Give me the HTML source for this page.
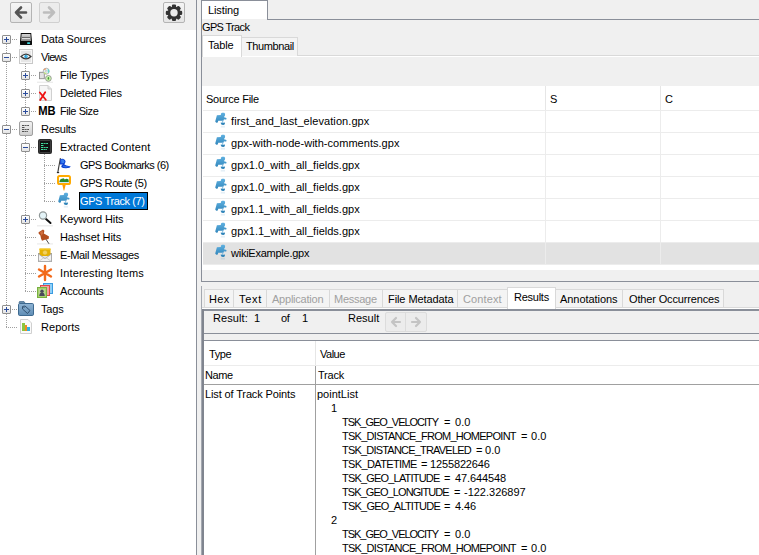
<!DOCTYPE html>
<html><head><meta charset="utf-8">
<style>
*{box-sizing:border-box;margin:0;padding:0}
html,body{width:759px;height:555px;overflow:hidden;background:#f0f0f0}
body{position:relative;font-family:"Liberation Sans",sans-serif;font-size:11px;color:#000}
.a{position:absolute}
.t{position:absolute;white-space:nowrap;line-height:13px;font-size:11px}
.dim{color:#a0a0a0}
.hl{position:absolute;height:1px}
.vl{position:absolute;width:1px}
.dh{position:absolute;height:1px;background-image:linear-gradient(90deg,#a0a0a0 50%,transparent 50%);background-size:2px 1px}
.dv{position:absolute;width:1px;background-image:linear-gradient(180deg,#a0a0a0 50%,transparent 50%);background-size:1px 2px}
.box{position:absolute;width:9px;height:9px;border:1px solid #8f8f8f;border-radius:1px;background:linear-gradient(#ffffff,#e4e4e4)}
.box:before{content:"";position:absolute;left:1px;top:3px;width:5px;height:1px;background:#2b4c9c}
.box.p:after{content:"";position:absolute;left:3px;top:1px;width:1px;height:5px;background:#2b4c9c}
.btn{position:absolute;border:1px solid #b4b4b4;border-radius:2px;background:linear-gradient(#f5f5f5,#e5e5e5)}
.tab{position:absolute;border:1px solid #d9d9d9;border-bottom:none;background:#f4f4f4}
</style></head><body>

<div class="a" style="left:0;top:0;width:196px;height:30px;background:#f0f0f0"></div>
<div class="btn" style="left:10px;top:2px;width:22px;height:21px"></div>
<svg class="a" style="left:10px;top:2px" width="22" height="21" viewBox="0 0 22 21"><path d="M6 10.5 H16 M11 5.5 L6 10.5 L11 15.5" stroke="#545454" stroke-width="2.6" fill="none" stroke-linecap="round" stroke-linejoin="round"/></svg>
<div class="btn" style="left:39px;top:2px;width:21px;height:21px;border-color:#d0d0d0;background:#ececec"></div>
<svg class="a" style="left:39px;top:2px" width="21" height="21" viewBox="0 0 21 21"><path d="M5 10.5 H15 M10 5.5 L15 10.5 L10 15.5" stroke="#bdbdbd" stroke-width="2.6" fill="none" stroke-linecap="round" stroke-linejoin="round"/></svg>
<div class="btn" style="left:163px;top:2px;width:22px;height:21px"></div>
<svg class="a" style="left:163px;top:2px" width="22" height="21" viewBox="0 0 22 21">
<g fill="#333" transform="translate(11 10.8)">
<circle r="6.4"/>
<rect x="-2.1" y="-8.2" width="4.2" height="16.4" rx="1.2"/>
<rect x="-2.1" y="-8.2" width="4.2" height="16.4" rx="1.2" transform="rotate(45)"/>
<rect x="-2.1" y="-8.2" width="4.2" height="16.4" rx="1.2" transform="rotate(90)"/>
<rect x="-2.1" y="-8.2" width="4.2" height="16.4" rx="1.2" transform="rotate(135)"/>
</g>
<circle cx="11" cy="10.8" r="3.7" fill="#ececec"/>
</svg>
<div class="a" style="left:0;top:30px;width:196px;height:525px;background:#fff"></div>
<div class="vl" style="left:196px;top:0;height:555px;background:#8a8f99"></div>

<div class="dv" style="left:6px;top:44px;height:283px"></div>
<div class="dv" style="left:25px;top:62px;height:49px"></div>
<div class="dv" style="left:25px;top:134px;height:157px"></div>
<div class="dv" style="left:44px;top:154px;height:47px"></div>
<div class="dh" style="left:12px;top:39px;width:6px"></div>
<div class="box p" style="left:2px;top:35px"></div>
<div class="t" style="left:41px;top:33px;letter-spacing:-0.16px;">Data Sources</div>
<div class="dh" style="left:12px;top:57px;width:6px"></div>
<div class="box" style="left:2px;top:53px"></div>
<div class="t" style="left:41px;top:51px;letter-spacing:-0.70px;">Views</div>
<div class="dh" style="left:31px;top:75px;width:6px"></div>
<div class="box p" style="left:21px;top:71px"></div>
<div class="t" style="left:60px;top:69px;letter-spacing:-0.14px;">File Types</div>
<div class="dh" style="left:31px;top:93px;width:6px"></div>
<div class="box p" style="left:21px;top:89px"></div>
<div class="t" style="left:60px;top:87px;letter-spacing:-0.19px;">Deleted Files</div>
<div class="dh" style="left:31px;top:111px;width:6px"></div>
<div class="box p" style="left:21px;top:107px"></div>
<div class="t" style="left:60px;top:105px;letter-spacing:-0.42px;">File Size</div>
<div class="dh" style="left:12px;top:129px;width:6px"></div>
<div class="box" style="left:2px;top:125px"></div>
<div class="t" style="left:41px;top:123px;letter-spacing:-0.25px;">Results</div>
<div class="dh" style="left:31px;top:147px;width:6px"></div>
<div class="box" style="left:21px;top:143px"></div>
<div class="t" style="left:60px;top:141px;letter-spacing:0.14px;">Extracted Content</div>
<div class="dh" style="left:44px;top:165px;width:12px"></div>
<div class="t" style="left:80px;top:159px;letter-spacing:-0.54px;">GPS Bookmarks (6)</div>
<div class="dh" style="left:44px;top:183px;width:12px"></div>
<div class="t" style="left:80px;top:177px;letter-spacing:-0.42px;">GPS Route (5)</div>
<div class="dh" style="left:44px;top:201px;width:12px"></div>
<div class="a" style="left:79px;top:192px;width:69px;height:18px;background:#0078d7;border:1px solid #000"></div>
<div class="t" style="left:80px;top:195px;letter-spacing:-0.39px;color:#fff">GPS Track (7)</div>
<div class="dh" style="left:31px;top:219px;width:6px"></div>
<div class="box p" style="left:21px;top:215px"></div>
<div class="t" style="left:60px;top:213px;letter-spacing:-0.11px;">Keyword Hits</div>
<div class="dh" style="left:25px;top:237px;width:12px"></div>
<div class="t" style="left:60px;top:231px;letter-spacing:-0.10px;">Hashset Hits</div>
<div class="dh" style="left:25px;top:255px;width:12px"></div>
<div class="t" style="left:60px;top:249px;letter-spacing:-0.36px;">E-Mail Messages</div>
<div class="dh" style="left:25px;top:273px;width:12px"></div>
<div class="t" style="left:60px;top:267px;letter-spacing:0.16px;">Interesting Items</div>
<div class="dh" style="left:25px;top:291px;width:12px"></div>
<div class="t" style="left:60px;top:285px;letter-spacing:-0.21px;">Accounts</div>
<div class="dh" style="left:12px;top:309px;width:6px"></div>
<div class="box p" style="left:2px;top:305px"></div>
<div class="t" style="left:41px;top:303px;letter-spacing:-0.13px;">Tags</div>
<div class="dh" style="left:6px;top:327px;width:12px"></div>
<div class="t" style="left:41px;top:321px;letter-spacing:0.05px;">Reports</div>
<svg class="a" style="left:0;top:0" width="196" height="345" viewBox="0 0 196 345">
<defs>
<linearGradient id="gsilver" x1="0" y1="0" x2="0" y2="1"><stop offset="0" stop-color="#d8d8d8"/><stop offset="1" stop-color="#8a8a8a"/></linearGradient>
<linearGradient id="ggrey" x1="0" y1="0" x2="0" y2="1"><stop offset="0" stop-color="#f4f4f4"/><stop offset="1" stop-color="#cfcfcf"/></linearGradient>
<linearGradient id="gfold" x1="0" y1="0" x2="0" y2="1"><stop offset="0" stop-color="#8fb4d4"/><stop offset="1" stop-color="#5f8db5"/></linearGradient>
<linearGradient id="gpuz" x1="0" y1="0" x2="0" y2="1"><stop offset="0" stop-color="#5fb0e0"/><stop offset="1" stop-color="#2a7fb5"/></linearGradient>
<symbol id="puz" viewBox="0 0 20 22">
<path d="M5.9 5.2 L9.8 4.9 L10.0 3.6 L11.0 2.8 L13.2 2.8 L14.1 3.8 L14.0 5.6 L13.2 6.6 L13.4 7.5 L15.0 7.7 L15.6 8.6 L15.2 9.6 L14.0 9.6 L13.0 9.2 L12.4 10.8 L7.2 10.8 L6.8 12.6 L5.2 12.8 L4.2 11.6 Z M9.5 12.8 L11.2 12.4 L12.6 12.8 L14.0 12.6 L13.8 14.2 L12.6 15.0 L10.6 14.8 Z" fill="url(#gpuz)"/>
<rect x="11.2" y="10.6" width="1" height="2" fill="#7ab8e0"/>
<rect x="9.8" y="15.8" width="4.2" height="1.8" fill="#2a7fb5" opacity="0.12"/>
</symbol>
</defs>
<!-- Data Sources drive -->
<path d="M20.8 33 H31.2 L32 41.5 V44.6 Q32 45 31.6 45 H20.4 Q20 45 20 44.6 V41.5 Z" fill="#0a0a0a"/>
<path d="M21.6 34 H30.4 L31 41 H21 Z" fill="url(#gsilver)"/>
<rect x="22" y="37" width="8" height="1" fill="#6a6a6a"/>
<rect x="22" y="38" width="8" height="1" fill="#e0e0e0"/>
<rect x="27" y="42.2" width="3.2" height="1.8" rx="0.9" fill="#3fd8e0"/>
<rect x="19" y="45.5" width="14" height="1" fill="#000" opacity="0.08"/>
<!-- Views eye -->
<rect x="19.5" y="49.5" width="13" height="14" fill="#f8f8f8" stroke="#c8c8c8"/>
<rect x="21" y="51" width="10" height="11" fill="#e6e6e6"/>
<path d="M21 56.5 Q26 51.8 31 56.5 Q26 61.2 21 56.5 Z" fill="#fff" stroke="#3a3a3a" stroke-width="1.2"/>
<circle cx="26" cy="56.5" r="1.7" fill="#2aa0d8"/><circle cx="26.4" cy="56" r="0.5" fill="#a0f0ff"/>
<!-- File Types -->
<rect x="39.5" y="72.3" width="4.8" height="6.4" fill="#e2e2e2" stroke="#8c8c8c" stroke-width="0.9"/>
<circle cx="46.2" cy="71.2" r="3" fill="#e8f4f4" stroke="#9a9a9a" stroke-width="0.7"/>
<path d="M44 70 A2.4 2.4 0 0 1 46 68.8" stroke="#f0a070" stroke-width="1.3" fill="none"/>
<path d="M47.8 69.4 A2.4 2.4 0 0 1 48.2 72.6" stroke="#60d8d0" stroke-width="1.3" fill="none"/>
<path d="M44.2 72.4 A2.4 2.4 0 0 0 46.4 73.6" stroke="#c0e080" stroke-width="1.2" fill="none"/>
<circle cx="46.2" cy="71.2" r="0.9" fill="#fff" stroke="#888" stroke-width="0.4"/>
<circle cx="48.4" cy="78.4" r="2.9" fill="#cdf5b0" stroke="#8c8c8c" stroke-width="0.8"/>
<ellipse cx="48.4" cy="78.4" rx="0.8" ry="1.3" fill="#4a9a3a"/>
<rect x="37" y="81.6" width="16" height="1.4" fill="#000" opacity="0.07"/>
<!-- Deleted Files -->
<path d="M39.5 85.5 H48 L51.5 89 V100.5 H39.5 Z" fill="#f6f6f6" stroke="#d0d0d0"/>
<path d="M48 85.5 V89 H51.5" fill="#e4e4e4" stroke="#d0d0d0"/>
<path d="M39.8 92.5 L45.8 99.8 M45.2 92.2 L40.2 100" stroke="#ee1111" stroke-width="1.8" stroke-linecap="round"/>
<!-- File Size MB -->
<text x="38.2" y="114.7" font-family="Liberation Sans" font-weight="bold" font-size="13.2" fill="#000" textLength="17.4" lengthAdjust="spacingAndGlyphs">MB</text>
<!-- Results -->
<rect x="19.5" y="121.5" width="13" height="14" rx="1.5" fill="url(#ggrey)" stroke="#a0a0a0"/>
<path d="M22 125.5 H29 M22 127.5 H25 M22 129.5 H29 M22 131.5 H28" stroke="#505050" stroke-width="1" stroke-dasharray="2.5 0.6 1.5 0.6"/>
<!-- Extracted Content -->
<rect x="38" y="139" width="14" height="15" rx="2" fill="#2a2a2a"/>
<rect x="39.5" y="140.5" width="11" height="12" rx="1" fill="#111" stroke="#555" stroke-width="0.6"/>
<path d="M41 143.5 H48 M41 145.5 H44 M41 147.5 H48 M41 149.5 H47" stroke="#40e0a0" stroke-width="1" stroke-dasharray="2.5 0.6 1.5 0.6"/>
<!-- GPS Bookmarks flag -->
<path d="M60.4 158.2 L57.8 172.4" stroke="#3a3a3a" stroke-width="1.1"/>
<ellipse cx="58" cy="172.6" rx="1.3" ry="0.7" fill="#111"/>
<path d="M60.2 159 L63 158.8 L65 160 L65.6 161.8 L64.8 163.6 L64.4 164.6 L66.5 165.4 L70.8 166.6 L69.4 167.8 L66 168.2 L63 168 L61.2 167 L61.6 165.6 L62.8 164.6 L60 164.4 Z" fill="#0a3fd0"/>
<path d="M61 159.6 L63.2 159.4 L64.6 161 L64 163 L61.4 163.6 Z" fill="#3a7ef0"/>
<path d="M63 165.6 L66 166 L69.5 166.8 L66 167.4 L63 167 Z" fill="#2a6ae8"/>
<!-- GPS Route -->
<rect x="58" y="176" width="12" height="8" rx="1.6" fill="#fff" stroke="#ffaa00" stroke-width="2"/>
<rect x="59" y="182" width="10" height="1" fill="#c8e8f8"/>
<path d="M59.3 182 Q60 178.6 62.2 178.8 Q63.2 177.6 64.8 179.4 Q66.6 178 68.6 179.4 L68.8 182 Z" fill="#2a8a2a"/>
<path d="M62.4 185 L65.6 185 L64.3 190.5 L63.7 190.5 Z" fill="#ff9a00"/>
<!-- GPS Track -->
<use href="#puz" x="54" y="190" width="20" height="22"/>
<!-- Keyword Hits magnifier -->
<path d="M46 219 L50.5 223" stroke="#111" stroke-width="2" stroke-linecap="round"/>
<circle cx="43" cy="215.5" r="3.6" fill="#e4f4f8" stroke="#909898" stroke-width="1.2"/>
<rect x="37" y="225" width="16" height="1.5" fill="#000" opacity="0.07"/>
<!-- Hashset Hits pushpin -->
<path d="M45.8 239 L49 243.8" stroke="#3a3a3a" stroke-width="0.9"/>
<path d="M38.6 232.2 L43 229.6 L44.4 230.8 L43.8 233.6 L47.4 235.4 L49 236.6 L48.6 239 L44.8 239.8 L42 240.8 L41 238.6 L40.4 235.6 L38.6 233.6 Z" fill="#b44e1e"/>
<path d="M40 232.6 L42.6 230.6 L43 233.2 L41.6 235.8 Z" fill="#d07040"/>
<rect x="37" y="243.2" width="16" height="1.4" fill="#000" opacity="0.07"/>
<!-- E-Mail envelope -->
<rect x="38.5" y="253.5" width="13" height="8" fill="#e6e6e6" stroke="#a0a0a0"/>
<rect x="39.5" y="248.6" width="11" height="7.4" fill="#e6b000"/>
<rect x="39.5" y="248.6" width="11" height="1.4" fill="#f4c418"/>
<circle cx="45" cy="252.6" r="2.5" fill="#f2d060" stroke="#d8a800" stroke-width="0.6"/>
<path d="M38.5 254 L45 258.6 L51.5 254 V261.5 H38.5 Z" fill="#f2f2f2" stroke="#a8a8a8" stroke-width="0.9"/>
<path d="M39 261.2 L44 257.6 M51 261.2 L46 257.6" stroke="#c4c4c4" stroke-width="0.8"/>
<!-- Interesting Items asterisk -->
<path d="M45 266 V280 M39 269.5 L51 276.5 M51 269.5 L39 276.5" stroke="#f26a1b" stroke-width="2.4" stroke-linecap="round"/>
<!-- Accounts -->
<rect x="43.5" y="283.5" width="9" height="10" fill="#8fd0f8" stroke="#3a9be0"/>
<rect x="40.5" y="285.5" width="9" height="10" fill="#f8a0a0" stroke="#e04848"/>
<rect x="37.5" y="287.5" width="9" height="10" fill="#a8d070" stroke="#78b040"/>
<rect x="39" y="289" width="6" height="7" fill="#b8d890"/>
<circle cx="42" cy="291.2" r="1.7" fill="#4a4a5a"/>
<path d="M39.2 296 Q39.5 292.6 42 292.6 Q44.5 292.6 44.8 296 Z" fill="#4a4a5a"/>
<!-- Tags folder -->
<path d="M19 303 L19.5 301.5 H24 L25 303 Z" fill="#7aa0c0" stroke="#4a7090" stroke-width="0.8"/>
<rect x="18.5" y="303.5" width="15" height="12" rx="1.2" fill="url(#gfold)" stroke="#3e6a90"/>
<path d="M22.5 306.5 L25 306 L30 310.5 L27.5 313.5 L22.5 309 Z" fill="none" stroke="#2a4a68" stroke-width="0.9"/>
<circle cx="24" cy="307.5" r="0.6" fill="#2a4a68"/>
<!-- Reports -->
<path d="M20.5 319.5 H28 L31.5 323 V333.5 H20.5 Z" fill="#fafafa" stroke="#d0d0d0"/>
<rect x="22" y="323" width="3" height="8" fill="#8cc63f"/>
<rect x="25" y="325" width="2" height="6" fill="#f08a24"/>
<rect x="27" y="327" width="3" height="4" fill="#31b0e0"/>
</svg>

<div class="vl" style="left:201px;top:19px;height:263px;background:#8a8f99"></div>
<div class="a" style="left:201px;top:0;width:67px;height:19px;background:#fff;border:1px solid #8a8f99;border-bottom:none"></div>
<div class="hl" style="left:267px;top:19px;width:492px;background:#8a8f99"></div>
<div class="t" style="left:208px;top:4px;letter-spacing:-0.12px;">Listing</div>
<div class="t" style="left:202px;top:21px;letter-spacing:-0.66px;">GPS Track</div>
<div class="hl" style="left:202px;top:55px;width:557px;background:#d9d9d9"></div>
<div class="hl" style="left:202px;top:56px;width:557px;background:#fff"></div>
<div class="tab" style="left:241px;top:37px;width:57px;height:19px"></div>
<div class="a" style="left:202px;top:35px;width:40px;height:22px;background:#fff;border:1px solid #d9d9d9;border-bottom:none"></div>
<div class="t" style="left:208px;top:39px;letter-spacing:-0.17px;">Table</div>
<div class="t" style="left:246px;top:40px;letter-spacing:-0.38px;">Thumbnail</div>
<div class="a" style="left:202px;top:86px;width:557px;height:195px;background:#fff"></div>
<div class="a" style="left:202px;top:270px;width:557px;height:11px;background:#f0f0f0"></div>
<div class="hl" style="left:202px;top:281px;width:557px;background:#8a8f99"></div>
<div class="vl" style="left:545px;top:86px;height:24px;background:#e6e6e6"></div>
<div class="vl" style="left:660px;top:86px;height:24px;background:#e6e6e6"></div>
<div class="hl" style="left:203px;top:110px;width:556px;background:#ececec"></div>
<div class="t" style="left:206px;top:93px;letter-spacing:-0.25px;">Source File</div>
<div class="t" style="left:550px;top:93px;letter-spacing:-0.30px;">S</div>
<div class="t" style="left:665px;top:93px;letter-spacing:-0.30px;">C</div>
<div class="a" style="left:203px;top:243px;width:556px;height:21px;background:#e2e2e2"></div>
<div class="hl" style="left:203px;top:132px;width:556px;background:#ececec"></div>
<div class="t" style="left:231px;top:115px;letter-spacing:0.07px;">first_and_last_elevation.gpx</div>
<svg class="a" style="left:211px;top:110px" width="20" height="22"><use href="#puz" width="20" height="22"/></svg>
<div class="hl" style="left:203px;top:154px;width:556px;background:#ececec"></div>
<div class="t" style="left:231px;top:137px;letter-spacing:0.03px;">gpx-with-node-with-comments.gpx</div>
<svg class="a" style="left:211px;top:132px" width="20" height="22"><use href="#puz" width="20" height="22"/></svg>
<div class="hl" style="left:203px;top:176px;width:556px;background:#ececec"></div>
<div class="t" style="left:231px;top:159px;letter-spacing:0.01px;">gpx1.0_with_all_fields.gpx</div>
<svg class="a" style="left:211px;top:154px" width="20" height="22"><use href="#puz" width="20" height="22"/></svg>
<div class="hl" style="left:203px;top:198px;width:556px;background:#ececec"></div>
<div class="t" style="left:231px;top:181px;letter-spacing:0.01px;">gpx1.0_with_all_fields.gpx</div>
<svg class="a" style="left:211px;top:176px" width="20" height="22"><use href="#puz" width="20" height="22"/></svg>
<div class="hl" style="left:203px;top:220px;width:556px;background:#ececec"></div>
<div class="t" style="left:231px;top:203px;letter-spacing:0.01px;">gpx1.1_with_all_fields.gpx</div>
<svg class="a" style="left:211px;top:198px" width="20" height="22"><use href="#puz" width="20" height="22"/></svg>
<div class="hl" style="left:203px;top:242px;width:556px;background:#ececec"></div>
<div class="t" style="left:231px;top:225px;letter-spacing:0.01px;">gpx1.1_with_all_fields.gpx</div>
<svg class="a" style="left:211px;top:220px" width="20" height="22"><use href="#puz" width="20" height="22"/></svg>
<div class="hl" style="left:203px;top:264px;width:556px;background:#ececec"></div>
<div class="t" style="left:231px;top:247px;letter-spacing:-0.25px;">wikiExample.gpx</div>
<svg class="a" style="left:211px;top:242px" width="20" height="22"><use href="#puz" width="20" height="22"/></svg>
<div class="vl" style="left:545px;top:111px;height:153px;background:#ececec"></div>
<div class="vl" style="left:660px;top:111px;height:153px;background:#ececec"></div>
<div class="vl" style="left:201px;top:286px;height:269px;background:#a4a8b0"></div>
<div class="tab" style="left:204px;top:289px;width:30px;height:19px"></div>
<div class="t" style="left:209px;top:293px;letter-spacing:0.40px;">Hex</div>
<div class="tab" style="left:233px;top:289px;width:34px;height:19px"></div>
<div class="t" style="left:239px;top:293px;letter-spacing:0.67px;">Text</div>
<div class="tab" style="left:266px;top:289px;width:64px;height:19px"></div>
<div class="t dim" style="left:272px;top:293px;letter-spacing:-0.23px;">Application</div>
<div class="tab" style="left:329px;top:289px;width:54px;height:19px"></div>
<div class="t dim" style="left:334px;top:293px;letter-spacing:-0.27px;">Message</div>
<div class="tab" style="left:382px;top:289px;width:76px;height:19px"></div>
<div class="t" style="left:388px;top:293px;letter-spacing:-0.08px;">File Metadata</div>
<div class="tab" style="left:457px;top:289px;width:51px;height:19px"></div>
<div class="t dim" style="left:463px;top:293px;letter-spacing:0.12px;">Context</div>
<div class="tab" style="left:555px;top:289px;width:68px;height:19px"></div>
<div class="t" style="left:560px;top:293px;letter-spacing:-0.06px;">Annotations</div>
<div class="tab" style="left:622px;top:289px;width:102px;height:19px"></div>
<div class="t" style="left:629px;top:293px;letter-spacing:-0.15px;">Other Occurrences</div>
<div class="hl" style="left:202px;top:307px;width:557px;background:#dadada"></div>
<div class="hl" style="left:202px;top:308px;width:557px;background:#fff"></div>
<div class="a" style="left:202px;top:309px;width:557px;height:2px;background:#8a8f99"></div>
<div class="a" style="left:507px;top:287px;width:49px;height:22px;background:#fff;border:1px solid #d9d9d9;border-bottom:none"></div>
<div class="t" style="left:514px;top:291px;letter-spacing:-0.25px;">Results</div>
<div class="a" style="left:202px;top:309px;width:2px;height:246px;background:#80858f"></div>
<div class="hl" style="left:204px;top:333px;width:555px;background:#8a8f99"></div>
<div class="hl" style="left:204px;top:340px;width:555px;background:#8a8f99"></div>
<div class="t" style="left:213px;top:312px;letter-spacing:0.08px;">Result:</div>
<div class="t" style="left:254px;top:312px;letter-spacing:-0.30px;">1</div>
<div class="t" style="left:281px;top:312px;letter-spacing:-0.30px;">of</div>
<div class="t" style="left:302px;top:312px;letter-spacing:-0.30px;">1</div>
<div class="t" style="left:348px;top:312px;letter-spacing:0.02px;">Result</div>
<div class="btn" style="left:385px;top:312px;width:42px;height:20px;border-color:#dcdcdc;background:#ececec"></div>
<div class="vl" style="left:405px;top:313px;height:18px;background:#dcdcdc"></div>
<svg class="a" style="left:385px;top:312px" width="42" height="20" viewBox="0 0 42 20"><path d="M7 10 H15 M11 6 L7 10 L11 14 M27 10 H35 M31 6 L35 10 L31 14" stroke="#c4c4c4" stroke-width="2.2" fill="none" stroke-linecap="round" stroke-linejoin="round"/></svg>
<div class="a" style="left:204px;top:341px;width:555px;height:214px;background:#fff"></div>
<div class="vl" style="left:315px;top:341px;height:24px;background:#e6e6e6"></div>
<div class="hl" style="left:204px;top:365px;width:555px;background:#ececec"></div>
<div class="vl" style="left:315px;top:366px;height:189px;background:#a0a0a0"></div>
<div class="hl" style="left:204px;top:384px;width:555px;background:#a0a0a0"></div>
<div class="t" style="left:209px;top:348px;letter-spacing:-0.37px;">Type</div>
<div class="t" style="left:320px;top:348px;letter-spacing:-0.50px;">Value</div>
<div class="t" style="left:205px;top:369px;letter-spacing:-0.40px;">Name</div>
<div class="t" style="left:318px;top:369px;letter-spacing:-0.23px;">Track</div>
<div class="t" style="left:205px;top:388px;letter-spacing:-0.13px;">List of Track Points</div>
<div class="t" style="left:317px;top:388px;letter-spacing:0.00px;">pointList</div>
<div class="t" style="left:331px;top:402px;letter-spacing:-0.30px;">1</div>
<div class="t" style="left:331px;top:514px;letter-spacing:-0.30px;">2</div>
<div class="t" style="left:342px;top:416px;letter-spacing:-1.03px;">TSK_GEO_VELOCITY</div>
<div class="t" style="left:444px;top:416px;letter-spacing:0.00px;">=</div>
<div class="t" style="left:455px;top:416px;letter-spacing:0.05px;">0.0</div>
<div class="t" style="left:342px;top:430px;letter-spacing:-0.73px;">TSK_DISTANCE_FROM_HOMEPOINT</div>
<div class="t" style="left:521px;top:430px;letter-spacing:0.00px;">=</div>
<div class="t" style="left:531px;top:430px;letter-spacing:0.05px;">0.0</div>
<div class="t" style="left:342px;top:444px;letter-spacing:-0.80px;">TSK_DISTANCE_TRAVELED</div>
<div class="t" style="left:476px;top:444px;letter-spacing:0.00px;">=</div>
<div class="t" style="left:485px;top:444px;letter-spacing:0.05px;">0.0</div>
<div class="t" style="left:342px;top:458px;letter-spacing:-0.63px;">TSK_DATETIME</div>
<div class="t" style="left:421px;top:458px;letter-spacing:0.00px;">=</div>
<div class="t" style="left:430px;top:458px;letter-spacing:-0.14px;">1255822646</div>
<div class="t" style="left:342px;top:472px;letter-spacing:-0.81px;">TSK_GEO_LATITUDE</div>
<div class="t" style="left:444px;top:472px;letter-spacing:0.00px;">=</div>
<div class="t" style="left:455px;top:472px;letter-spacing:-0.12px;">47.644548</div>
<div class="t" style="left:342px;top:486px;letter-spacing:-0.91px;">TSK_GEO_LONGITUDE</div>
<div class="t" style="left:454px;top:486px;letter-spacing:0.00px;">=</div>
<div class="t" style="left:464px;top:486px;letter-spacing:-0.01px;">-122.326897</div>
<div class="t" style="left:342px;top:500px;letter-spacing:-0.78px;">TSK_GEO_ALTITUDE</div>
<div class="t" style="left:444px;top:500px;letter-spacing:0.00px;">=</div>
<div class="t" style="left:455px;top:500px;letter-spacing:-0.13px;">4.46</div>
<div class="t" style="left:342px;top:528px;letter-spacing:-1.03px;">TSK_GEO_VELOCITY</div>
<div class="t" style="left:444px;top:528px;letter-spacing:0.00px;">=</div>
<div class="t" style="left:455px;top:528px;letter-spacing:0.05px;">0.0</div>
<div class="t" style="left:342px;top:542px;letter-spacing:-0.73px;">TSK_DISTANCE_FROM_HOMEPOINT</div>
<div class="t" style="left:521px;top:542px;letter-spacing:0.00px;">=</div>
<div class="t" style="left:531px;top:542px;letter-spacing:0.05px;">0.0</div>
</body></html>
